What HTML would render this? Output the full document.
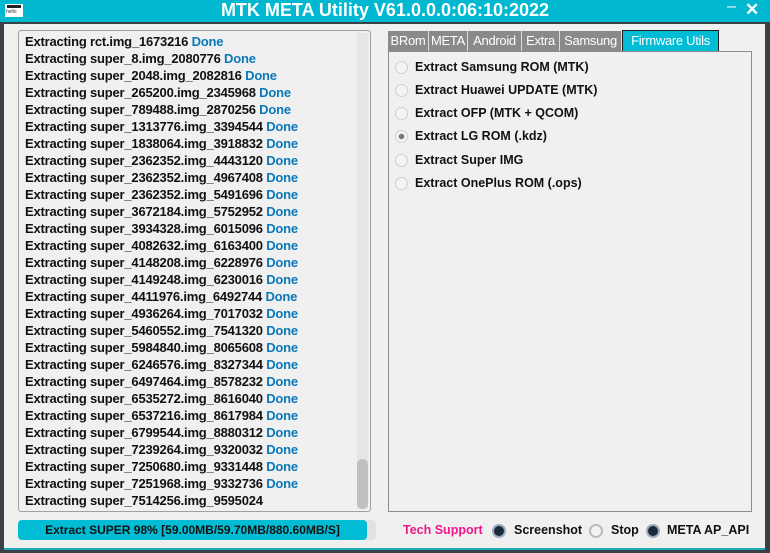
<!DOCTYPE html>
<html><head><style>
body{margin:0;width:770px;height:553px;background:#3a4046;position:relative;overflow:hidden;font-family:"Liberation Sans",sans-serif;}
.t{position:absolute;left:0;top:0;width:770px;height:22px;background:#00b9d1;}
.t .h{position:absolute;left:0;width:770px;text-align:center;top:0px;color:#fff;font-weight:bold;font-size:18px;}
.body{position:absolute;left:4px;top:24px;width:761px;height:524px;background:#f0f0f0;}
.bl{position:absolute;left:4px;top:548px;width:761px;height:2px;background:#1fa9bd;}
.log{position:absolute;left:18px;top:30px;width:351px;height:480px;border:1px solid #a0a0a0;border-radius:3px;background:#f0f0f0;}
.ln{position:absolute;left:6px;font-weight:bold;font-size:13px;color:#111;white-space:nowrap;letter-spacing:-0.2px}
.ln b{color:#0b78b8}
.sb{position:absolute;left:338px;top:2px;width:11px;height:476px;background:#e6e6e6;}
.th{position:absolute;left:338px;top:428px;width:11px;height:50px;background:#c0c0c0;border-radius:5px}
.tab{position:absolute;top:31px;height:20px;background:#8a8a8a;color:#fff;font-size:13px;line-height:20px;text-align:center;border-right:1px solid #ddd;letter-spacing:-0.3px}
.panel{position:absolute;left:388px;top:51px;width:362px;height:459px;border:1px solid #8c8c8c;background:#f0f0f0}
.r{position:absolute;left:395px;font-weight:bold;font-size:12.5px;color:#111}
.r i{position:absolute;left:0;top:1px;width:11px;height:11px;border:1px solid #d0d0d0;border-radius:50%;background:#f4f4f4}
.r span{position:absolute;left:20px;white-space:nowrap}
.pb{position:absolute;left:18px;top:520px;width:349px;height:20px;background:#00bcd4;border-radius:4px;font-weight:bold;font-size:12px;line-height:20px;text-align:center;color:#111}
.bt{position:absolute;top:523px;font-weight:bold;font-size:12.5px;color:#111;white-space:nowrap}
.rd{position:absolute;top:524px;width:10px;height:10px;border-radius:50%;background:#1b2a3a;border:2px solid #9ab}
</style></head><body>
<div class="t"><div class="h">MTK META Utility V61.0.0.0:06:10:2022</div>
<div style="position:absolute;left:5px;top:4px;width:18px;height:13px;background:#fff"><div style="margin:1px 2px;height:3px;background:#222"></div><div style="font-size:5px;color:#333;margin-left:1px">hello</div></div>
<div style="position:absolute;left:727px;top:-2px;color:#fff;font-size:16px">–</div>
<div style="position:absolute;left:745px;top:0px;color:#fff;font-size:17px;font-weight:bold">✕</div></div>
<div class="body"></div><div class="bl"></div>
<div class="log">
<div class="ln" style="top:3px">Extracting rct.img_1673216 <b>Done</b></div>
<div class="ln" style="top:20px">Extracting super_8.img_2080776 <b>Done</b></div>
<div class="ln" style="top:37px">Extracting super_2048.img_2082816 <b>Done</b></div>
<div class="ln" style="top:54px">Extracting super_265200.img_2345968 <b>Done</b></div>
<div class="ln" style="top:71px">Extracting super_789488.img_2870256 <b>Done</b></div>
<div class="ln" style="top:88px">Extracting super_1313776.img_3394544 <b>Done</b></div>
<div class="ln" style="top:105px">Extracting super_1838064.img_3918832 <b>Done</b></div>
<div class="ln" style="top:122px">Extracting super_2362352.img_4443120 <b>Done</b></div>
<div class="ln" style="top:139px">Extracting super_2362352.img_4967408 <b>Done</b></div>
<div class="ln" style="top:156px">Extracting super_2362352.img_5491696 <b>Done</b></div>
<div class="ln" style="top:173px">Extracting super_3672184.img_5752952 <b>Done</b></div>
<div class="ln" style="top:190px">Extracting super_3934328.img_6015096 <b>Done</b></div>
<div class="ln" style="top:207px">Extracting super_4082632.img_6163400 <b>Done</b></div>
<div class="ln" style="top:224px">Extracting super_4148208.img_6228976 <b>Done</b></div>
<div class="ln" style="top:241px">Extracting super_4149248.img_6230016 <b>Done</b></div>
<div class="ln" style="top:258px">Extracting super_4411976.img_6492744 <b>Done</b></div>
<div class="ln" style="top:275px">Extracting super_4936264.img_7017032 <b>Done</b></div>
<div class="ln" style="top:292px">Extracting super_5460552.img_7541320 <b>Done</b></div>
<div class="ln" style="top:309px">Extracting super_5984840.img_8065608 <b>Done</b></div>
<div class="ln" style="top:326px">Extracting super_6246576.img_8327344 <b>Done</b></div>
<div class="ln" style="top:343px">Extracting super_6497464.img_8578232 <b>Done</b></div>
<div class="ln" style="top:360px">Extracting super_6535272.img_8616040 <b>Done</b></div>
<div class="ln" style="top:377px">Extracting super_6537216.img_8617984 <b>Done</b></div>
<div class="ln" style="top:394px">Extracting super_6799544.img_8880312 <b>Done</b></div>
<div class="ln" style="top:411px">Extracting super_7239264.img_9320032 <b>Done</b></div>
<div class="ln" style="top:428px">Extracting super_7250680.img_9331448 <b>Done</b></div>
<div class="ln" style="top:445px">Extracting super_7251968.img_9332736 <b>Done</b></div>
<div class="ln" style="top:462px">Extracting super_7514256.img_9595024</div>
<div class="sb"></div><div class="th"></div>
</div>
<div class="tab" style="left:388px;width:40px">BRom</div>
<div class="tab" style="left:429px;width:38px">META</div>
<div class="tab" style="left:468px;width:53px">Android</div>
<div class="tab" style="left:522px;width:37px">Extra</div>
<div class="tab" style="left:560px;width:61px">Samsung</div>
<div class="tab" style="left:622px;width:95px;background:#00bcd4;border:1px solid #222;top:30px;height:21px">Firmware Utils</div>
<div class="panel"></div>
<div class="r" style="top:60px"><i></i><span>Extract Samsung ROM (MTK)</span></div>
<div class="r" style="top:83px"><i></i><span>Extract Huawei UPDATE (MTK)</span></div>
<div class="r" style="top:106px"><i></i><span>Extract OFP (MTK + QCOM)</span></div>
<div class="r" style="top:129px"><i style="background:radial-gradient(circle,#777 0 2.5px,#f4f4f4 3px)"></i><span>Extract LG ROM (.kdz)</span></div>
<div class="r" style="top:153px"><i></i><span>Extract Super IMG</span></div>
<div class="r" style="top:176px"><i></i><span>Extract OnePlus ROM (.ops)</span></div>
<div style="position:absolute;left:18px;top:520px;width:358px;height:20px;background:#e2e2e2;border-radius:4px"></div>
<div class="pb">Extract SUPER 98% [59.00MB/59.70MB/880.60MB/S]</div>
<div class="bt" style="left:403px;color:#f0168a">Tech Support</div>
<div class="rd" style="left:492px"></div>
<div class="bt" style="left:514px">Screenshot</div>
<div class="rd" style="left:589px;background:#f4f4f4;border-color:#bbb"></div>
<div class="bt" style="left:611px">Stop</div>
<div class="rd" style="left:646px"></div>
<div class="bt" style="left:667px">META AP_API</div>
</body></html>
